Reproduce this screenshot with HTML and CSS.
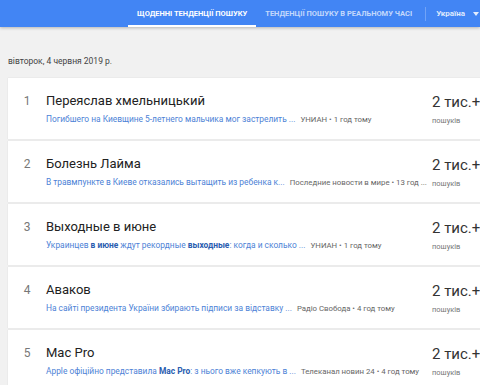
FILE: index.html
```html
<!DOCTYPE html>
<html lang="uk">
<head>
<meta charset="UTF-8">
<title>Google Trends</title>
<link rel="stylesheet" href="styles.css">
</head>
<body>
<div class="header">
	<div class="tab active">Щоденні тенденції пошуку</div>
	<div class="tab">Тенденції пошуку в реальному часі</div>
	<div class="sep"></div>
	<div class="geo">Україна <span class="arrow"></span></div>
</div>
<div class="date">вівторок, 4 червня 2019 р.</div>
<div class="list">
	<div class="card">
		<div class="num">1</div>
		<div class="main">
			<div class="title">Переяслав хмельницький</div>
			<div class="sub"><span class="link">Погибшего на Киевщине 5-летнего мальчика мог застрелить ...</span><span class="src">УНИАН • 1 год тому</span></div>
		</div>
		<div class="count"><div class="big">2 тис.+</div><div class="small">пошуків</div></div>
	</div>
	<div class="card">
		<div class="num">2</div>
		<div class="main">
			<div class="title">Болезнь Лайма</div>
			<div class="sub"><span class="link">В травмпункте в Киеве отказались вытащить из ребенка к...</span><span class="src">Последние новости в мире • 13 год ...</span></div>
		</div>
		<div class="count"><div class="big">2 тис.+</div><div class="small">пошуків</div></div>
	</div>
	<div class="card">
		<div class="num">3</div>
		<div class="main">
			<div class="title">Выходные в июне</div>
			<div class="sub"><span class="link">Украинцев <b>в июне</b> ждут рекордные <b>выходные</b>: когда и сколько ...</span><span class="src">УНИАН • 1 год тому</span></div>
		</div>
		<div class="count"><div class="big">2 тис.+</div><div class="small">пошуків</div></div>
	</div>
	<div class="card">
		<div class="num">4</div>
		<div class="main">
			<div class="title">Аваков</div>
			<div class="sub"><span class="link">На сайті президента України збирають підписи за відставку ...</span><span class="src">Радіо Свобода • 4 год тому</span></div>
		</div>
		<div class="count"><div class="big">2 тис.+</div><div class="small">пошуків</div></div>
	</div>
	<div class="card">
		<div class="num">5</div>
		<div class="main">
			<div class="title">Mac Pro</div>
			<div class="sub"><span class="link">Apple офіційно представила <b>Mac Pro</b>: з нього вже кепкують в ...</span><span class="src">Телеканал новин 24 • 4 год тому</span></div>
		</div>
		<div class="count"><div class="big">2 тис.+</div><div class="small">пошуків</div></div>
	</div>
</div>
</body>
</html>
```

FILE: styles.css
```css
body {
	margin: 0;
	background: #f1f1f1;
	font-family: Roboto, 'Liberation Sans', sans-serif;
	overflow: hidden;
}
.header {
	height: 27px;
	background: #4285f4;
	display: flex;
	align-items: stretch;
	padding-left: 128px;
	box-shadow: 0 1px 3px rgba(0, 0, 0, .25);
}
.tab {
	font-size: 7.5px;
	font-weight: 700;
	text-transform: uppercase;
	color: rgba(255, 255, 255, .7);
	padding: 0 9px;
	display: flex;
	align-items: center;
	border-bottom: 2px solid transparent;
	padding-top: 2px;
	white-space: nowrap;
}
.tab.active {
	color: #fff;
	border-bottom-color: #fff;
}
.sep {
	width: 1px;
	height: 14px;
	background: rgba(255, 255, 255, .25);
	align-self: center;
	margin-left: 4px;
}
.geo {
	font-size: 8px;
	font-weight: 700;
	color: rgba(255, 255, 255, .85);
	display: flex;
	align-items: center;
	margin-left: 10px;
	white-space: nowrap;
}
.arrow {
	width: 0;
	height: 0;
	border-left: 3px solid transparent;
	border-right: 3px solid transparent;
	border-top: 4px solid rgba(255, 255, 255, .85);
	margin-left: 8px;
}
.date {
	font-size: 8.5px;
	color: #444;
	padding: 29px 0 0 8px;
	height: 22px;
}
.list {
	margin-left: 8px;
	display: flex;
	flex-direction: column;
	gap: 2px;
}
.card {
	background: #fff;
	height: 61px;
	display: flex;
	box-shadow: 0 0 1px rgba(0, 0, 0, .15);
}
.num {
	width: 38px;
	text-align: center;
	font-size: 12px;
	color: #777;
	padding-top: 16px;
}
.main {
	flex: 1;
	padding-top: 15px;
	min-width: 0;
}
.title {
	font-size: 13px;
	color: #222;
	white-space: nowrap;
}
.sub {
	font-size: 8.4px;
	margin-top: 6px;
	white-space: nowrap;
}
.link {
	color: #4d82d6;
}
.link b {
	color: #2a5db0;
}
.src {
	color: #666;
	font-size: 7.8px;
	margin-left: 5px;
}
.count {
	width: 48px;
	padding-top: 15px;
}
.big {
	font-size: 15px;
	color: #333;
	white-space: nowrap;
}
.small {
	font-size: 7.5px;
	color: #777;
	margin-top: 5px;
}
```
